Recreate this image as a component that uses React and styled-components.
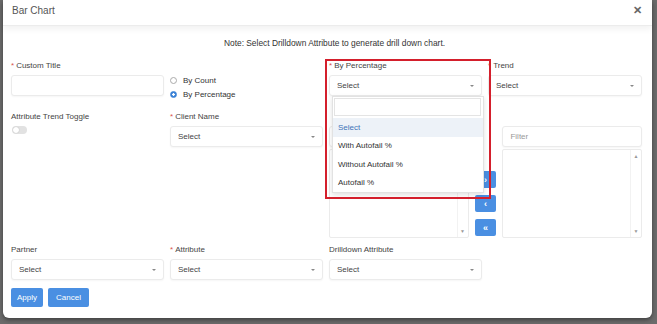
import React from 'react';
import styled, { createGlobalStyle } from 'styled-components';

const GlobalStyle = createGlobalStyle`
  html, body {
    margin: 0;
    padding: 0;
    background: #6b6b6b;
    font-family: "Liberation Sans", Arial, sans-serif;
  }
`;

const Backdrop = styled.div`
  width: 657px;
  height: 324px;
  overflow: hidden;
  background: #6b6b6b;
`;

const Modal = styled.div`
  margin-left: 3px;
  width: 649px;
  height: 318px;
  background: #fff;
  border-radius: 0 0 6px 6px;
  box-shadow: 0 2px 4px rgba(0, 0, 0, 0.4);
`;

const Header = styled.div`
  box-sizing: border-box;
  height: 26px;
  padding: 0 10px 5px 9px;
  display: flex;
  align-items: center;
  justify-content: space-between;
  border-bottom: 1px solid #ececec;
  box-shadow: 0 3px 7px rgba(0, 0, 0, 0.06);
`;

const Title = styled.span`
  font-size: 10px;
  color: #555;
`;

const Close = styled.span`
  font-size: 11px;
  font-weight: bold;
  color: #666;
`;

const Body = styled.div`
  padding: 12px 8px 0 8px;
`;

const Note = styled.div`
  font-size: 8.4px;
  line-height: 10px;
  color: #333;
  text-align: center;
  padding-left: 14px;
`;

const FormGrid = styled.div`
  margin-top: 13px;
  display: grid;
  grid-template-columns: 153px 153px 153px 154px;
  column-gap: 6px;
  row-gap: 7px;
`;

const Field = styled.div`
  position: relative;
  grid-column: ${({ span }) => (span ? `span ${span}` : 'auto')};
`;

const Label = styled.div`
  height: 10px;
  line-height: 10px;
  margin-bottom: 4px;
  font-size: 8px;
  color: #444;
  white-space: nowrap;
`;

const Star = styled.span`
  color: #d9534f;
  margin-right: 2px;
`;

const Box = styled.div`
  box-sizing: border-box;
  height: ${({ h }) => h || 21}px;
  border: 1px solid #ebebeb;
  border-radius: 3px;
  background: #fff;
  box-shadow: 0 1px 2px rgba(0, 0, 0, 0.04);
  display: flex;
  align-items: center;
  padding: 0 7px;
  font-size: 8px;
  color: #444;
`;

const SelectBox = styled(Box)`
  justify-content: space-between;
`;

const Caret = styled.span`
  width: 0;
  height: 0;
  border-left: 2px solid transparent;
  border-right: 2px solid transparent;
  border-top: 2px solid #888;
`;

const Placeholder = styled.span`
  color: #999;
`;

const RadioGroup = styled.div`
  padding: 12px 0 4px;
  display: flex;
  flex-direction: column;
`;

const RadioRow = styled.label`
  height: 14px;
  display: flex;
  align-items: center;
  gap: 6px;
  font-size: 8px;
  color: #333;
`;

const RadioDot = styled.span`
  box-sizing: border-box;
  width: 7px;
  height: 7px;
  border-radius: 50%;
  border: 1px solid ${({ checked }) => (checked ? '#3b82d6' : '#aaa')};
  background: ${({ checked }) => (checked ? 'radial-gradient(circle, #fff 0 1px, #3b82d6 1.5px)' : '#fff')};
`;

const Toggle = styled.span`
  display: block;
  margin: 3px 0 0 1px;
  width: 15px;
  height: 8px;
  border-radius: 4px;
  background: #e2e2e2;
  position: relative;
  &::after {
    content: '';
    position: absolute;
    left: 1px;
    top: 1px;
    width: 6px;
    height: 6px;
    border-radius: 50%;
    background: #fff;
    box-shadow: 0 0 1px rgba(0, 0, 0, 0.3);
  }
`;

const DualList = styled.div`
  display: flex;
  gap: 6px;
`;

const ListColumn = styled.div`
  width: 140px;
  display: flex;
  flex-direction: column;
  gap: 2px;
`;

const ListArea = styled.div`
  box-sizing: border-box;
  height: 89px;
  border: 1px solid #ebebeb;
  border-radius: 2px;
  display: flex;
  justify-content: flex-end;
`;

const Scroll = styled.div`
  width: 10px;
  border-left: 1px solid #f2f2f2;
  display: flex;
  flex-direction: column;
  justify-content: space-between;
  align-items: center;
  padding: 3px 0;
  font-size: 5px;
  color: #999;
`;

const MoveButtons = styled.div`
  width: 22px;
  display: flex;
  flex-direction: column;
  justify-content: flex-end;
  gap: 7px;
  padding-bottom: 2px;
`;

const MoveButton = styled.div`
  height: 17px;
  border-radius: 2px;
  background: #4a8fe2;
  color: #fff;
  font-size: 9px;
  font-weight: bold;
  display: flex;
  align-items: center;
  justify-content: center;
`;

const Dropdown = styled.div`
  position: absolute;
  top: 35px;
  left: 3px;
  width: 152px;
  box-sizing: border-box;
  background: #fff;
  border: 1px solid #e2e2e2;
  box-shadow: 0 2px 5px rgba(0, 0, 0, 0.12);
  padding-top: 1px;
  z-index: 2;
`;

const Search = styled.div`
  box-sizing: border-box;
  height: 18px;
  margin: 0 2px 2px 1px;
  border: 1px solid #e4e4e4;
`;

const Option = styled.div`
  height: 18.5px;
  display: flex;
  align-items: center;
  padding-left: 5px;
  font-size: 8px;
  color: ${({ active }) => (active ? '#3d74b8' : '#333')};
  background: ${({ active }) => (active ? '#edf2f8' : '#fff')};
`;

const Highlight = styled.div`
  position: absolute;
  top: -2px;
  left: -4px;
  width: 166px;
  height: 140px;
  box-sizing: border-box;
  border: 2px solid #d41f2c;
  z-index: 3;
  pointer-events: none;
`;

const Actions = styled.div`
  margin-top: 8px;
  display: flex;
  gap: 5px;
`;

const Button = styled.button`
  height: 19px;
  padding: 0 ${({ wide }) => (wide ? 8 : 6)}px;
  border: none;
  border-radius: 2px;
  background: #4a8fe2;
  color: #fff;
  font-family: inherit;
  font-size: 8px;
`;

const Select = ({ value = 'Select' }) => (
  <SelectBox>
    <span>{value}</span>
    <Caret />
  </SelectBox>
);

const options = ['Select', 'With Autofail %', 'Without Autofail %', 'Autofail %'];

const App = () => (
  <Backdrop>
    <GlobalStyle />
    <Modal>
      <Header>
        <Title>Bar Chart</Title>
        <Close>✕</Close>
      </Header>
      <Body>
        <Note>Note: Select Drilldown Attribute to generate drill down chart.</Note>
        <FormGrid>
          <Field>
            <Label><Star>*</Star>Custom Title</Label>
            <Box />
          </Field>
          <RadioGroup>
            <RadioRow><RadioDot />By Count</RadioRow>
            <RadioRow><RadioDot checked />By Percentage</RadioRow>
          </RadioGroup>
          <Field>
            <Label><Star>*</Star>By Percentage</Label>
            <Select />
            <Dropdown>
              <Search />
              {options.map((o, i) => (
                <Option key={o} active={i === 0}>{o}</Option>
              ))}
            </Dropdown>
            <Highlight />
          </Field>
          <Field>
            <Label><Star>*</Star>Trend</Label>
            <Select />
          </Field>

          <Field>
            <Label>Attribute Trend Toggle</Label>
            <Toggle />
          </Field>
          <Field>
            <Label><Star>*</Star>Client Name</Label>
            <Select />
          </Field>
          <Field span={2}>
            <Label />
            <DualList>
              <ListColumn>
                <Box><Placeholder>Filter</Placeholder></Box>
                <ListArea>
                  <Scroll><span>▲</span><span>▼</span></Scroll>
                </ListArea>
              </ListColumn>
              <MoveButtons>
                <MoveButton>›</MoveButton>
                <MoveButton>‹</MoveButton>
                <MoveButton>«</MoveButton>
              </MoveButtons>
              <ListColumn>
                <Box><Placeholder>Filter</Placeholder></Box>
                <ListArea>
                  <Scroll><span>▲</span><span>▼</span></Scroll>
                </ListArea>
              </ListColumn>
            </DualList>
          </Field>

          <Field>
            <Label>Partner</Label>
            <Select />
          </Field>
          <Field>
            <Label><Star>*</Star>Attribute</Label>
            <Select />
          </Field>
          <Field>
            <Label>Drilldown Attribute</Label>
            <Select />
          </Field>
        </FormGrid>
        <Actions>
          <Button>Apply</Button>
          <Button wide>Cancel</Button>
        </Actions>
      </Body>
    </Modal>
  </Backdrop>
);

export default App;
